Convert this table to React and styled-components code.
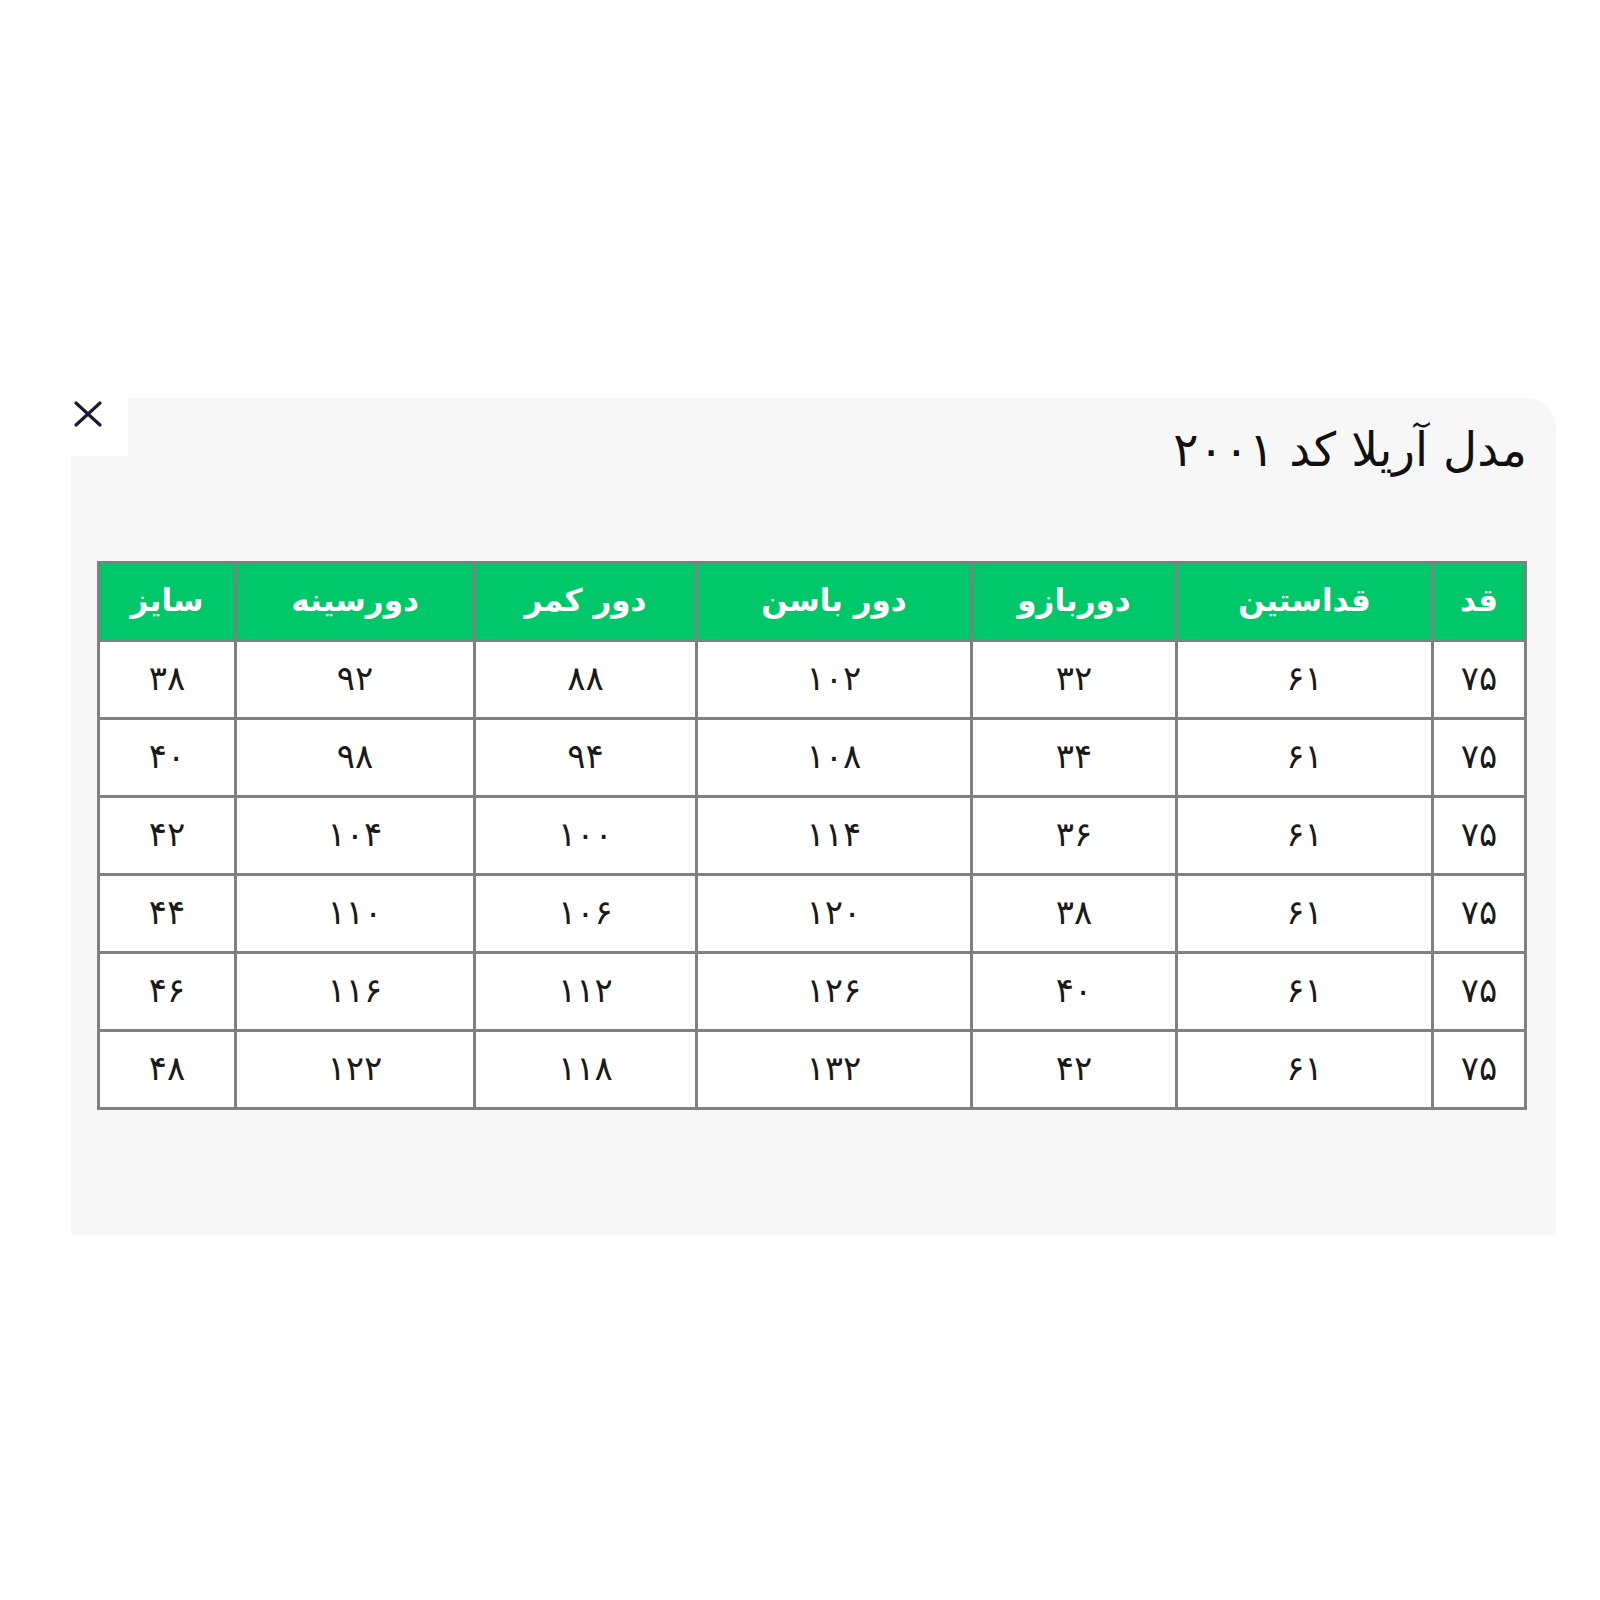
import styled, { createGlobalStyle } from "styled-components";

const GlobalStyle = createGlobalStyle`
  body {
    margin: 0;
    background: #ffffff;
    font-family: "DejaVu Sans", "Noto Sans", sans-serif;
  }
`;

const Page = styled.div`
  padding: 398px 0 0 71px;
  min-height: 1600px;
  box-sizing: border-box;
`;

const Panel = styled.div`
  position: relative;
  width: 1485px;
  height: 837px;
  box-sizing: border-box;
  padding: 24px 29px 0;
  background: #f7f7f7;
  border-top-right-radius: 30px;
  direction: rtl;
`;

const CloseButton = styled.button`
  position: absolute;
  top: 0;
  left: 0;
  width: 57px;
  height: 58px;
  padding: 2px 0 0 2px;
  border: none;
  background: #ffffff;
  direction: ltr;
  display: flex;
  align-items: flex-start;
  justify-content: flex-start;
  cursor: pointer;
`;

const Title = styled.h2`
  margin: 0;
  font-size: 47px;
  font-weight: normal;
  line-height: 56px;
  color: #111111;
  text-align: right;
`;

const Table = styled.table`
  margin-top: 83px;
  width: 100%;
  border-collapse: collapse;
  table-layout: fixed;
  border: 3px solid #808080;
`;

const HeadCell = styled.th`
  height: 71px;
  padding: 0 0 4px;
  border: 3px solid #808080;
  background: #00c86a;
  color: #ffffff;
  font-size: 31px;
  font-weight: bold;
  line-height: 40px;
  text-align: center;
  vertical-align: middle;
`;

const Cell = styled.td`
  height: 71px;
  padding: 0 0 4px;
  border: 3px solid #808080;
  background: #ffffff;
  color: #1a1a1a;
  font-size: 34px;
  line-height: 36px;
  text-align: center;
  vertical-align: middle;
`;

const columns = [
  { title: "قد", w: 93 },
  { title: "قداستین", w: 256 },
  { title: "دوربازو", w: 205 },
  { title: "دور باسن", w: 275 },
  { title: "دور کمر", w: 222 },
  { title: "دورسینه", w: 239 },
  { title: "سایز", w: 137 },
];

const rows = [
  ["۷۵", "۶۱", "۳۲", "۱۰۲", "۸۸", "۹۲", "۳۸"],
  ["۷۵", "۶۱", "۳۴", "۱۰۸", "۹۴", "۹۸", "۴۰"],
  ["۷۵", "۶۱", "۳۶", "۱۱۴", "۱۰۰", "۱۰۴", "۴۲"],
  ["۷۵", "۶۱", "۳۸", "۱۲۰", "۱۰۶", "۱۱۰", "۴۴"],
  ["۷۵", "۶۱", "۴۰", "۱۲۶", "۱۱۲", "۱۱۶", "۴۶"],
  ["۷۵", "۶۱", "۴۲", "۱۳۲", "۱۱۸", "۱۲۲", "۴۸"],
];

export default function App() {
  return (
    <>
      <GlobalStyle />
      <Page>
        <Panel>
          <CloseButton aria-label="بستن">
            <svg width="30" height="28" viewBox="0 0 30 28">
              <path
                d="M3 3 L27 25 M27 3 L3 25"
                stroke="#1b1838"
                strokeWidth="3.2"
                strokeLinecap="round"
                fill="none"
              />
            </svg>
          </CloseButton>
          <Title>مدل آریلا کد ۲۰۰۱</Title>
          <Table>
            <colgroup>
              {columns.map((c) => (
                <col key={c.title} style={{ width: c.w }} />
              ))}
            </colgroup>
            <thead>
              <tr>
                {columns.map((c) => (
                  <HeadCell key={c.title}>{c.title}</HeadCell>
                ))}
              </tr>
            </thead>
            <tbody>
              {rows.map((r, i) => (
                <tr key={i}>
                  {r.map((v, j) => (
                    <Cell key={j}>{v}</Cell>
                  ))}
                </tr>
              ))}
            </tbody>
          </Table>
        </Panel>
      </Page>
    </>
  );
}
